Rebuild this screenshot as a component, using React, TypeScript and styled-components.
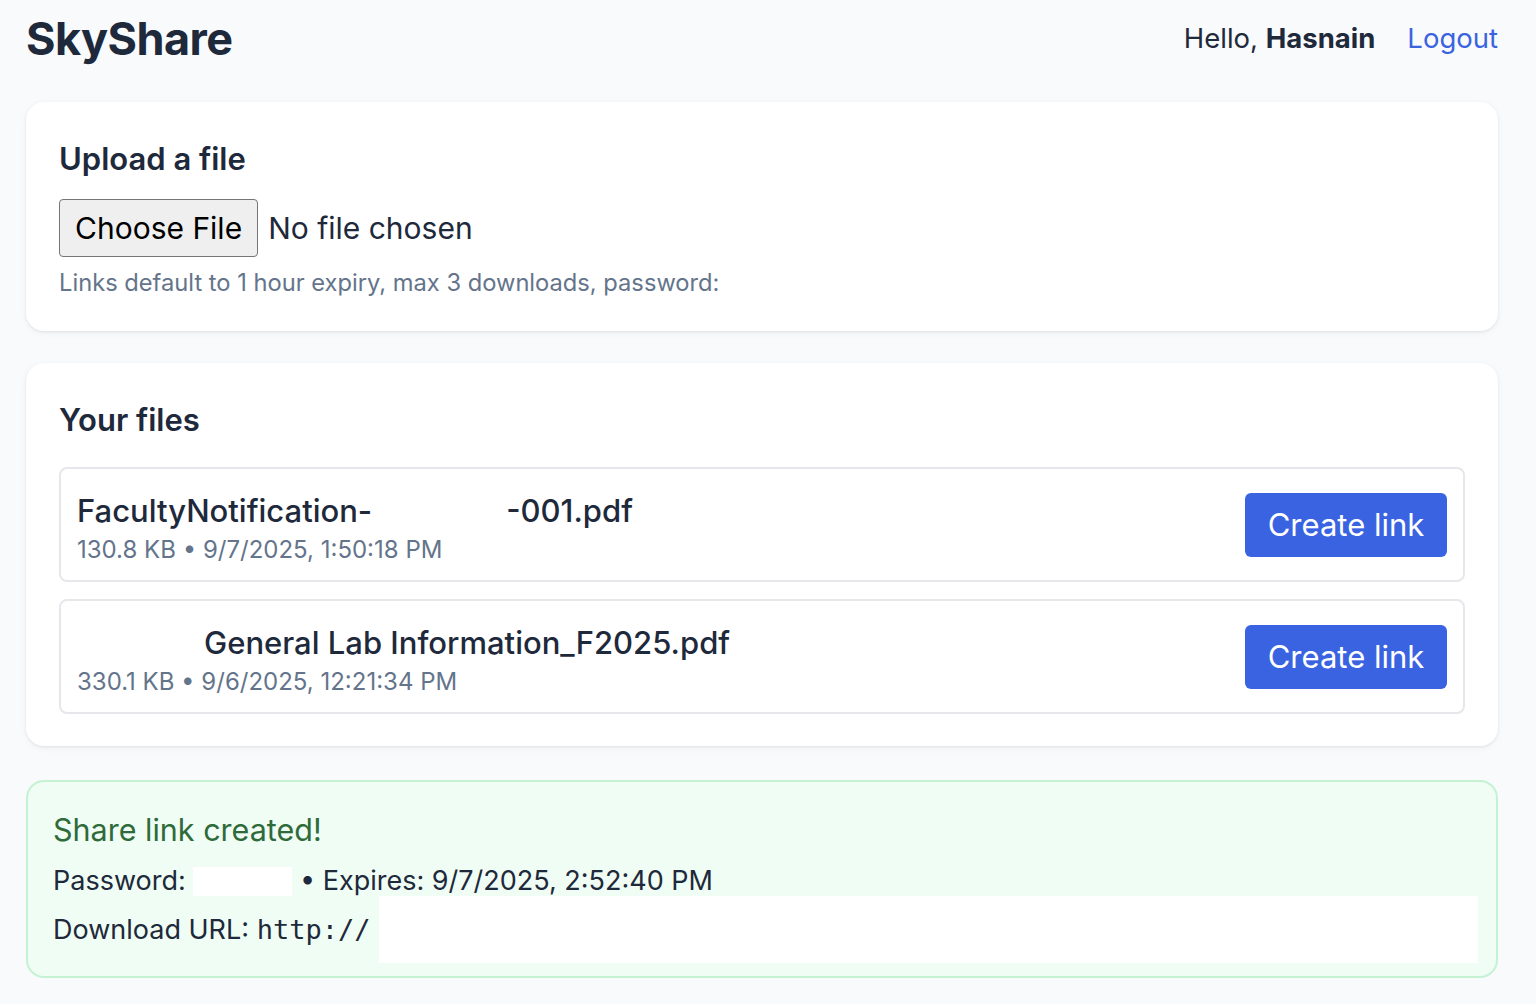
import React from "react";
import styled, { createGlobalStyle } from "styled-components";

const Global = createGlobalStyle`
  html, body { margin: 0; padding: 0; background: #f8fafc; }
  body { font-family: Inter, "Noto Sans", sans-serif; color: #1e293b; }
  * { box-sizing: border-box; }
`;

const Page = styled.div`
  padding: 10px 38px 28px 26px;
  display: flex;
  flex-direction: column;
`;

const Header = styled.header`
  display: flex;
  align-items: center;
  justify-content: space-between;
  height: 56px;
  margin-bottom: 36px;
`;

const Brand = styled.h1`
  margin: 0;
  font-size: 45px;
  font-weight: 700;
  letter-spacing: -0.5px;
  color: #1e293b;
`;

const UserBox = styled.div`
  display: flex;
  align-items: center;
  gap: 32px;
  font-size: 27.5px;
`;

const Greeting = styled.span`
  color: #1e293b;
  b { font-weight: 700; }
`;

const LogoutLink = styled.a`
  color: #3b63e0;
  text-decoration: none;
  cursor: pointer;
`;

const Card = styled.section`
  background: #ffffff;
  border-radius: 18px;
  box-shadow: 0 1px 3px rgba(15, 23, 42, 0.08), 0 2px 8px rgba(15, 23, 42, 0.04);
  padding: 37px 33px 32px 33px;
  margin-bottom: 32px;
  display: flex;
  flex-direction: column;
`;

const CardTitle = styled.h2<{ $gap?: number }>`
  margin: 0 0 ${(p) => p.$gap ?? 20}px 0;
  font-size: 31px;
  font-weight: 600;
  color: #1e293b;
  line-height: 40px;
`;

const FileInput = styled.input`
  font-family: Inter, sans-serif;
  font-size: 30px;
  color: #1e293b;
  height: 58px;
  &::file-selector-button {
    font-family: Inter, sans-serif;
    font-size: 30px;
    color: #000;
    background: #efefef;
    border: 1.5px solid #767676;
    border-radius: 4px;
    height: 58px;
    padding: 0 15px;
    margin-right: 10px;
  }
`;

const Hint = styled.p`
  margin: 10px 0 0 0;
  font-size: 23.7px;
  color: #64748b;
  line-height: 32px;
`;

const FileList = styled.div`
  display: flex;
  flex-direction: column;
  gap: 17px;
`;

const FileRow = styled.div`
  border: 2px solid #e5e7eb;
  border-radius: 8px;
  height: 115px;
  padding: 0 16px 0 16px;
  display: flex;
  align-items: center;
  justify-content: space-between;
`;

const FileInfo = styled.div`
  display: flex;
  flex-direction: column;
  gap: 3px;
  margin-top: 8px;
`;

const FileName = styled.div`
  font-size: 31px;
  font-weight: 500;
  color: #1e293b;
  line-height: 40px;
  display: flex;
`;

const Redacted = styled.span<{ $w: number; $h?: number; $bg?: string; $ml?: number }>`
  display: inline-block;
  width: ${(p) => p.$w}px;
  height: ${(p) => p.$h ?? 20}px;
  margin-left: ${(p) => p.$ml ?? 0}px;
  background: ${(p) => p.$bg ?? "transparent"};
  flex: none;
`;

const FileMeta = styled.div`
  font-size: 24px;
  color: #64748b;
  line-height: 32px;
`;

const PrimaryButton = styled.button`
  font-family: Inter, sans-serif;
  font-size: 31px;
  color: #ffffff;
  background: #3a63e2;
  border: none;
  border-radius: 6px;
  width: 202px;
  height: 64px;
  cursor: pointer;
`;

const Success = styled.section`
  background: #f0fdf4;
  border: 2px solid #c6f2d4;
  border-radius: 18px;
  margin-top: 2px;
  padding: 28px 18px 13px 25px;
  display: flex;
  flex-direction: column;
`;

const SuccessTitle = styled.div`
  font-size: 30.5px;
  color: #2f6b3a;
  line-height: 40px;
  margin-bottom: 16px;
`;

const InfoLine = styled.div`
  display: flex;
  align-items: center;
  font-size: 27px;
  color: #1e293b;
  line-height: 30px;
  white-space: pre;
`;

const Mono = styled.span`
  font-family: "DejaVu Sans Mono", "Liberation Mono", monospace;
  font-size: 27px;
`;

export default function App() {
  return (
    <>
      <Global />
      <Page>
        <Header>
          <Brand>SkyShare</Brand>
          <UserBox>
            <Greeting>
              Hello, <b>Hasnain</b>
            </Greeting>
            <LogoutLink>Logout</LogoutLink>
          </UserBox>
        </Header>

        <Card>
          <CardTitle>Upload a file</CardTitle>
          <div>
            <FileInput type="file" />
          </div>
          <Hint>Links default to 1 hour expiry, max 3 downloads, password:</Hint>
        </Card>

        <Card>
          <CardTitle $gap={27}>Your files</CardTitle>
          <FileList>
            <FileRow>
              <FileInfo>
                <FileName>
                  <span>FacultyNotification-</span>
                  <Redacted $w={134} />
                  <span>-001.pdf</span>
                </FileName>
                <FileMeta>130.8 KB • 9/7/2025, 1:50:18 PM</FileMeta>
              </FileInfo>
              <PrimaryButton>Create link</PrimaryButton>
            </FileRow>
            <FileRow>
              <FileInfo>
                <FileName>
                  <Redacted $w={127} />
                  <span>General Lab Information_F2025.pdf</span>
                </FileName>
                <FileMeta>330.1 KB • 9/6/2025, 12:21:34 PM</FileMeta>
              </FileInfo>
              <PrimaryButton>Create link</PrimaryButton>
            </FileRow>
          </FileList>
        </Card>

        <Success>
          <SuccessTitle>Share link created!</SuccessTitle>
          <InfoLine>
            <span>Password: </span>
            <Redacted $w={99} $h={29} $bg="#ffffff" />
            <span> • Expires: 9/7/2025, 2:52:40 PM</span>
          </InfoLine>
          <InfoLine>
            <span>Download URL: </span>
            <Mono>http://</Mono>
            <Redacted $w={1099} $h={67} $bg="#ffffff" $ml={9} />
          </InfoLine>
        </Success>
      </Page>
    </>
  );
}
